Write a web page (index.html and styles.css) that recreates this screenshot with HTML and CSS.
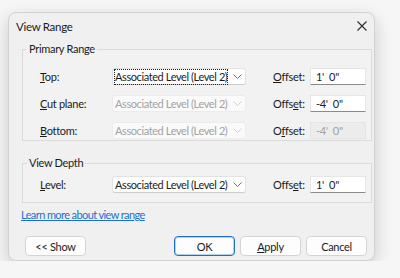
FILE: index.html
```html
<!DOCTYPE html>
<html lang="en">
<head>
  <meta charset="UTF-8">
  <title>View Range</title>
  <link rel="stylesheet" href="styles.css">
</head>
<body>
  <div class="dialog">
    <div class="titlebar">
      <span class="title">View Range</span>
      <svg class="close" width="10" height="10" viewBox="0 0 10 10">
        <path d="M0.5 0.5 L9.5 9.5 M9.5 0.5 L0.5 9.5" stroke="#2b2b2b" stroke-width="1.1" fill="none"/>
      </svg>
    </div>

    <fieldset class="group primary">
      <legend>Primary Range</legend>
      <div class="row">
        <label class="lbl"><u>T</u>op:</label>
        <div class="combo">
          <span class="value focused">Associated Level (Level 2)</span>
          <svg class="chev" width="9" height="5" viewBox="0 0 9 5"><path d="M0.5 0.5 L4.5 4.5 L8.5 0.5" stroke="#707070" fill="none"/></svg>
        </div>
        <label class="off-lbl"><u>O</u>ffset:</label>
        <div class="field">1'  0"</div>
      </div>
      <div class="row">
        <label class="lbl"><u>C</u>ut plane:</label>
        <div class="combo disabled">
          <span class="value">Associated Level (Level 2)</span>
          <svg class="chev" width="9" height="5" viewBox="0 0 9 5"><path d="M0.5 0.5 L4.5 4.5 L8.5 0.5" stroke="#cfcfcf" fill="none"/></svg>
        </div>
        <label class="off-lbl">Offs<u>e</u>t:</label>
        <div class="field">-4'  0"</div>
      </div>
      <div class="row">
        <label class="lbl"><u>B</u>ottom:</label>
        <div class="combo disabled">
          <span class="value">Associated Level (Level 2)</span>
          <svg class="chev" width="9" height="5" viewBox="0 0 9 5"><path d="M0.5 0.5 L4.5 4.5 L8.5 0.5" stroke="#cfcfcf" fill="none"/></svg>
        </div>
        <label class="off-lbl">O<u>f</u>fset:</label>
        <div class="field disabled">-4'  0"</div>
      </div>
    </fieldset>

    <fieldset class="group depth">
      <legend>View Depth</legend>
      <div class="row">
        <label class="lbl"><u>L</u>evel:</label>
        <div class="combo">
          <span class="value">Associated Level (Level 2)</span>
          <svg class="chev" width="9" height="5" viewBox="0 0 9 5"><path d="M0.5 0.5 L4.5 4.5 L8.5 0.5" stroke="#707070" fill="none"/></svg>
        </div>
        <label class="off-lbl">Offs<u>e</u>t:</label>
        <div class="field">1'  0"</div>
      </div>
    </fieldset>

    <a class="learn" href="#">Learn more about view range</a>

    <div class="buttons">
      <button class="btn">&lt;&lt; Show</button>
      <span class="spacer"></span>
      <button class="btn default">OK</button>
      <button class="btn"><u>A</u>pply</button>
      <button class="btn">Cancel</button>
    </div>
  </div>
</body>
</html>
```

FILE: styles.css
```css
body {
  margin: 0;
  background: #f6f6f6;
  font-family: "Segoe UI", Lato, "Open Sans", sans-serif;
  font-size: 11px;
  letter-spacing: -0.3px;
  color: #1b1b1b;
}
.dialog {
  margin: 12px 0 0 8px;
  width: 365px;
  height: 247px;
  border: 1px solid #d2d2d2;
  border-radius: 8px;
  background: #f0f0f0;
  box-shadow: 0 6px 18px rgba(0,0,0,0.18);
  display: flex;
  flex-direction: column;
}
.titlebar {
  height: 29px;
  box-sizing: border-box;
  padding: 0 7px 3px 7px;
  display: flex;
  align-items: center;
  justify-content: space-between;
}
.title {
  font-size: 11.5px;
}
.group {
  margin: 0 2px 0 13px;
  padding: 12px 0 1px 0;
  border: 1px solid #dadada;
  background: #f2f2f2;
  min-width: 0;
}
.group legend {
  margin-left: 4px;
  padding: 0 2px;
  line-height: 14px;
}
.group.depth {
  margin-top: 15px;
  padding: 6px 0 9px 0;
}
.row {
  display: flex;
  align-items: center;
  height: 17px;
  padding-left: 17px;
  margin-bottom: 10px;
}
.row:last-child {
  margin-bottom: 0;
}
.lbl {
  width: 72px;
}
.combo {
  width: 134px;
  height: 17px;
  box-sizing: border-box;
  padding: 0 3px 0 2px;
  display: flex;
  align-items: center;
  justify-content: space-between;
  background: #fff;
  border: 1px solid #e2e2e2;
  border-bottom-color: #cdcdcd;
  border-radius: 3px;
  white-space: nowrap;
}
.combo.disabled {
  background: #fafafa;
  border-color: #ececec;
  color: #a2a2a2;
}
.value {
  line-height: 14px;
  letter-spacing: -0.4px;
}
.value.focused {
  outline: 1px dotted #222;
}
.off-lbl {
  margin-left: 27px;
  width: 37px;
}
.field {
  width: 56px;
  height: 17px;
  box-sizing: border-box;
  padding-left: 5px;
  line-height: 15px;
  background: #fff;
  border: 1px solid #e6e6e6;
  border-bottom-color: #8a8a8a;
  white-space: pre;
}
.field.disabled {
  background: #ececec;
  border-color: #e4e4e4;
  color: #a2a2a2;
}
.learn {
  margin: 5px 0 0 12px;
  line-height: 14px;
  letter-spacing: -0.6px;
  color: #1a6fd1;
  align-self: flex-start;
}
.buttons {
  display: flex;
  gap: 5px;
  margin-top: 14px;
  padding: 0 7px 0 16px;
}
.spacer {
  flex: 1;
}
.btn {
  width: 61px;
  height: 20px;
  padding: 0;
  font: inherit;
  letter-spacing: inherit;
  color: #1b1b1b;
  background: #fdfdfd;
  border: 1px solid #d4d4d4;
  border-radius: 4px;
}
.btn.default {
  border: 1px solid #1d6fc4;
  box-shadow: inset 0 0 0 1px #b5d3f0;
}
```
